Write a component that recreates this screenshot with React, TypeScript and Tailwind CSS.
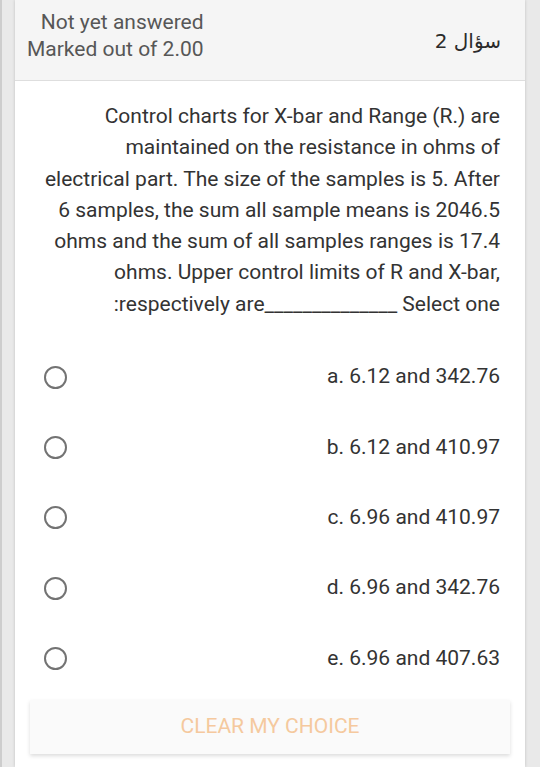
import { Fragment } from "react";

const QUESTION = [
  "Control charts for X-bar and Range (R.) are",
  "maintained on the resistance in ohms of",
  "electrical part. The size of the samples is 5. After",
  "6 samples, the sum all sample means is 2046.5",
  "ohms and the sum of all samples ranges is 17.4",
  "ohms. Upper control limits of R and X-bar,",
];

const OPTIONS = [
  "a. 6.12 and 342.76",
  "b. 6.12 and 410.97",
  "c. 6.96 and 410.97",
  "d. 6.96 and 342.76",
  "e. 6.96 and 407.63",
];

export default function App() {
  return (
    <div
      className="min-h-[767px] w-[540px] bg-[#e9e9e9] border-l-2 border-[#cdcdcd] pl-[13px] pr-[15px]"
      style={{ fontFamily: "Roboto, 'Noto Sans', Arial, sans-serif" }}
    >
      <div className="min-h-[767px] bg-white shadow-[0_0_3px_rgba(0,0,0,0.18)]">
        {/* header */}
        <div className="h-[81px] bg-[#f5f5f5] border-b border-[#dedede] flex items-start justify-between pl-[12px] pr-[24px]">
          <div className="pt-[9px] text-right text-[21px] leading-[27px] text-[#575757]">
            <div>Not yet answered</div>
            <div>Marked out of 2.00</div>
          </div>
          <div
            dir="rtl"
            className="pt-[27px] text-[20px] leading-[28px] text-[#2b2b2b]"
            style={{ fontFamily: "'DejaVu Sans', 'Noto Sans', sans-serif" }}
          >
            سؤال 2
          </div>
        </div>

        {/* question */}
        <div className="pl-[20px] pr-[25px] pt-[20px] text-right text-[21px] leading-[31.3px] text-[#333333]">
          {QUESTION.map((l) => (
            <Fragment key={l}>
              {l}
              <br />
            </Fragment>
          ))}
          :respectively are______________ Select one
        </div>

        {/* options */}
        <div className="mt-[22px] flex flex-col">
          {OPTIONS.map((o) => (
            <label
              key={o}
              className="h-[70.3px] flex items-center justify-between pl-[29px] pr-[25px] cursor-pointer"
            >
              <span className="w-[23px] h-[23px] rounded-full border-[2.5px] border-[#737373] bg-white" />
              <span className="text-[21px] text-[#333333]">{o}</span>
            </label>
          ))}
        </div>

        {/* clear */}
        <div className="px-[15px] pt-[6px]">
          <button className="w-full h-[54px] bg-[#fafafa] shadow-[0_2px_4px_rgba(0,0,0,0.14)] text-[21px] text-[#f5c99e]">
            CLEAR MY CHOICE
          </button>
        </div>
      </div>
    </div>
  );
}
